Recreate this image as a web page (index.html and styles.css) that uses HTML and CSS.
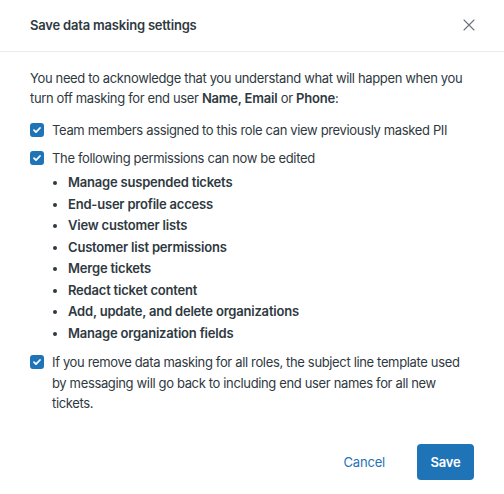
FILE: index.html
```html
<!DOCTYPE html>
<html lang="en">
<head>
<meta charset="utf-8">
<title>Save data masking settings</title>
<link rel="stylesheet" href="styles.css">
</head>
<body>
<div class="modal">
  <header class="modal-header">
    <h1 class="title">Save data masking settings</h1>
    <button class="close" aria-label="Close">
      <svg width="12" height="12" viewBox="0 0 12 12"><path d="M1 1l10 10M11 1L1 11" stroke="#68737d" stroke-width="1.1" fill="none" stroke-linecap="round"/></svg>
    </button>
  </header>
  <main class="modal-body">
    <p class="intro">You need to acknowledge that you understand what will happen when you turn off masking for end user <b>Name, Email</b> or <b>Phone</b>:</p>
    <div class="check-row first">
      <span class="box"><svg width="14" height="14" viewBox="0 0 14 14"><path d="M4 7.2l2 2 4-4.2" stroke="#fff" stroke-width="1.8" fill="none" stroke-linecap="round" stroke-linejoin="round"/></svg></span>
      <span class="label">Team members assigned to this role can view previously masked PII</span>
    </div>
    <div class="check-row">
      <span class="box"><svg width="14" height="14" viewBox="0 0 14 14"><path d="M4 7.2l2 2 4-4.2" stroke="#fff" stroke-width="1.8" fill="none" stroke-linecap="round" stroke-linejoin="round"/></svg></span>
      <span class="label">The following permissions can now be edited</span>
    </div>
    <ul class="perms">
      <li>Manage suspended tickets</li>
      <li>End-user profile access</li>
      <li>View customer lists</li>
      <li>Customer list permissions</li>
      <li>Merge tickets</li>
      <li>Redact ticket content</li>
      <li>Add, update, and delete organizations</li>
      <li>Manage organization fields</li>
    </ul>
    <div class="check-row last">
      <span class="box"><svg width="14" height="14" viewBox="0 0 14 14"><path d="M4 7.2l2 2 4-4.2" stroke="#fff" stroke-width="1.8" fill="none" stroke-linecap="round" stroke-linejoin="round"/></svg></span>
      <span class="label">If you remove data masking for all roles, the subject line template used by messaging will go back to including end user names for all new tickets.</span>
    </div>
  </main>
  <footer class="modal-footer">
    <button class="btn-link">Cancel</button>
    <button class="btn-primary">Save</button>
  </footer>
</div>
</body>
</html>
```
FILE: styles.css
```css
* { box-sizing: border-box; }
html, body { margin: 0; padding: 0; background: #fff; }
body {
  font-family: Inter, "Noto Sans", "Liberation Sans", sans-serif;
  color: #2f3941;
  font-size: 13px;
  letter-spacing: -0.35px;
  line-height: 20px;
  width: 504px;
  height: 494px;
  overflow: hidden;
}
b { font-weight: 600; letter-spacing: -0.2px; }
.modal { display: flex; flex-direction: column; height: 494px; }
.modal-header {
  display: flex;
  align-items: center;
  justify-content: space-between;
  height: 52px;
  padding: 0 30px 2px 30px;
  border-bottom: 1px solid #e9ebed;
}
.title {
  margin: 0;
  font-size: 13px;
  font-weight: 600;
  letter-spacing: -0.2px;
  line-height: 20px;
  color: #2f3941;
}
.close {
  border: 0;
  background: none;
  padding: 0;
  width: 12px;
  height: 12px;
  margin-right: -1px;
  display: flex;
}
.modal-body { padding: 16px 30px 0 30px; }
.intro { margin: 0; }
.check-row { display: flex; align-items: flex-start; gap: 8px; }
.check-row.first { margin-top: 12px; }
.check-row + .check-row { margin-top: 8px; }
.check-row.last { margin-top: 8px; line-height: 20.5px; }
.box {
  flex: none;
  width: 14px;
  height: 14px;
  margin-top: 3px;
  border-radius: 3px;
  background: #1f73b7;
  display: flex;
}
.perms {
  margin: 4px 0 0 0;
  padding: 0 0 0 38px;
  font-size: 13px;
  font-weight: 600;
  letter-spacing: -0.2px;
  line-height: 21.5px;
}
.modal-footer {
  margin-top: auto;
  display: flex;
  justify-content: flex-end;
  align-items: center;
  gap: 32px;
  padding: 0 30px 14px 30px;
}
.btn-link {
  border: 0;
  background: none;
  font: inherit;
  letter-spacing: -0.2px;
  color: #1f73b7;
  padding: 0;
}
.btn-primary {
  border: 0;
  font: inherit;
  font-weight: 600;
  letter-spacing: -0.2px;
  color: #fff;
  background: #1f73b7;
  border-radius: 4px;
  width: 57px;
  height: 36px;
  padding: 0;
}
```
